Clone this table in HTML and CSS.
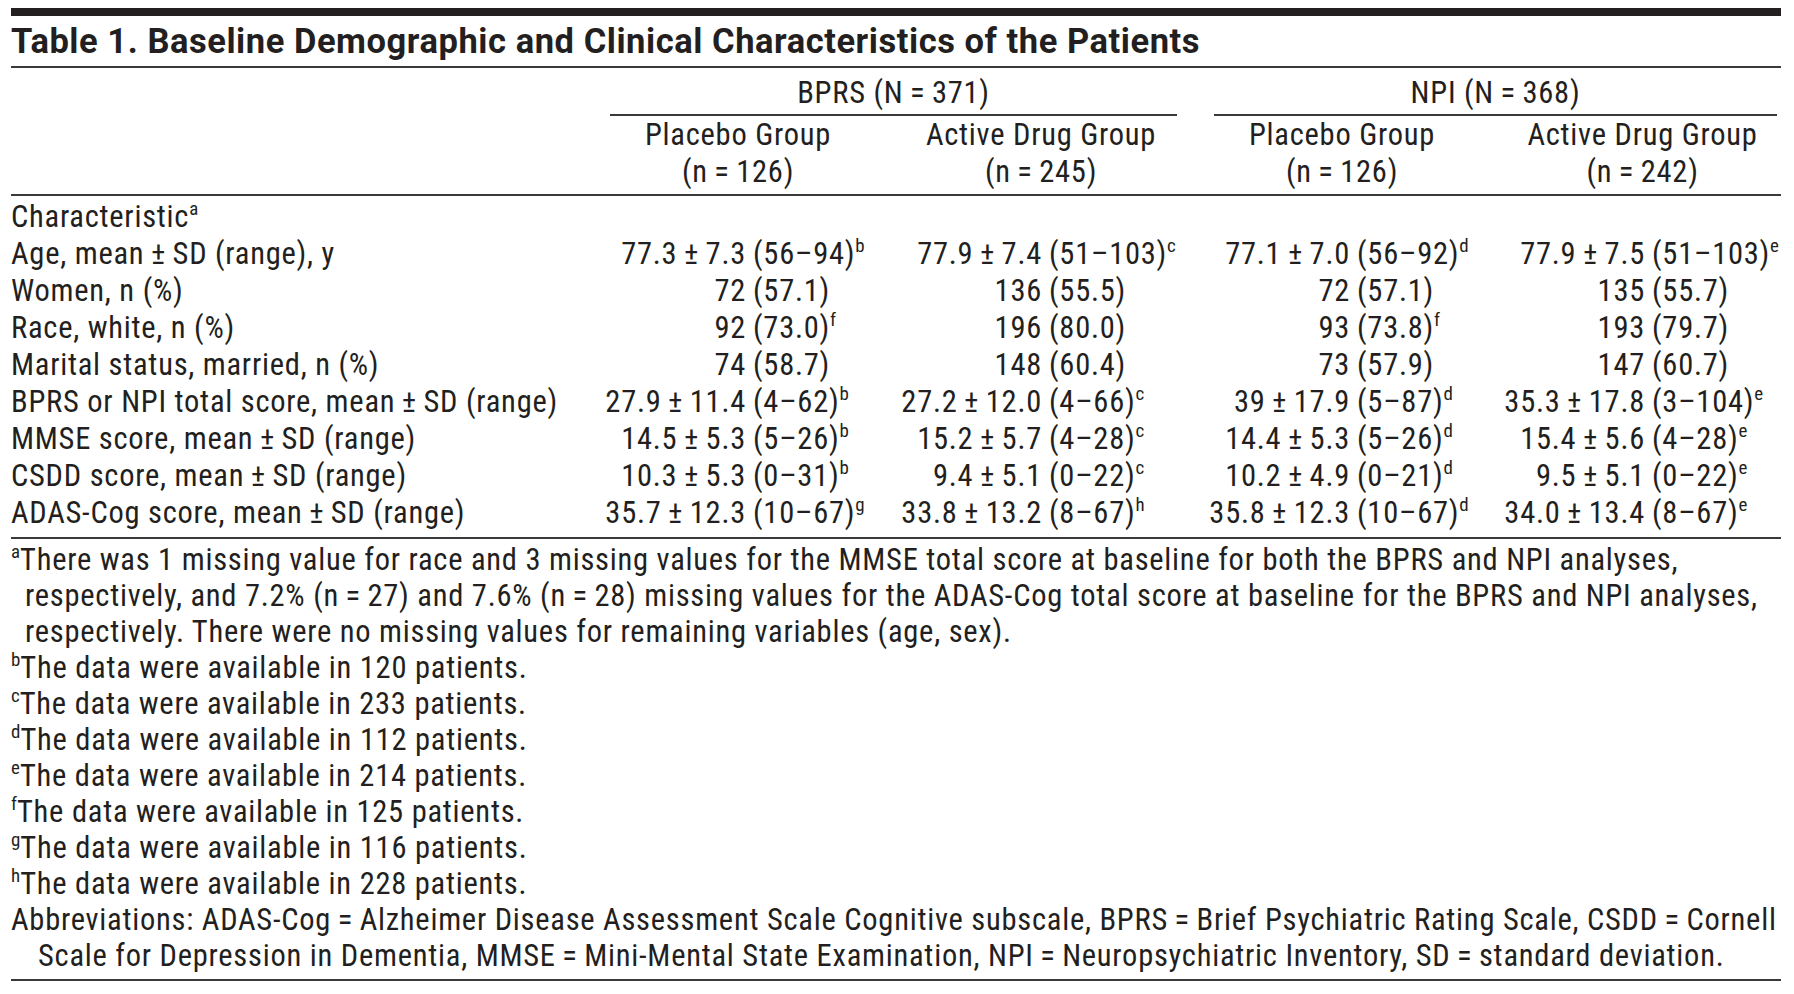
FILE: index.html
```html
<!DOCTYPE html>
<html lang="en">
<head>
<meta charset="utf-8">
<title>Table 1. Baseline Demographic and Clinical Characteristics of the Patients</title>
<link rel="stylesheet" href="styles.css">
</head>
<body>
<div class="page">
  <div class="topbar"></div>
  <h1 class="title">Table 1. Baseline Demographic and Clinical Characteristics of the Patients</h1>

  <div class="thead">
    <div class="span c-bprs">BPRS (N&#8201;=&#8201;371)</div>
    <div class="span c-npi">NPI (N&#8201;=&#8201;368)</div>
    <div class="hd c1">Placebo Group<br>(n&#8201;=&#8201;126)</div>
    <div class="hd c2">Active Drug Group<br>(n&#8201;=&#8201;245)</div>
    <div class="hd c3">Placebo Group<br>(n&#8201;=&#8201;126)</div>
    <div class="hd c4">Active Drug Group<br>(n&#8201;=&#8201;242)</div>
  </div>

  <div class="tbody">
    <div class="lab">Characteristic<sup>a</sup></div>

    <div class="lab">Age, mean&#8201;±&#8201;SD (range), y</div>
    <div class="v p c1"><span class="l">77.3&#8201;±&#8201;7.3</span><span class="r">(56–94)<sup>b</sup></span></div>
    <div class="v a c2"><span class="l">77.9&#8201;±&#8201;7.4</span><span class="r">(51–103)<sup>c</sup></span></div>
    <div class="v p c3"><span class="l">77.1&#8201;±&#8201;7.0</span><span class="r">(56–92)<sup>d</sup></span></div>
    <div class="v a c4"><span class="l">77.9&#8201;±&#8201;7.5</span><span class="r">(51–103)<sup>e</sup></span></div>

    <div class="lab">Women, n (%)</div>
    <div class="v p c1"><span class="l">72</span><span class="r">(57.1)</span></div>
    <div class="v a c2"><span class="l">136</span><span class="r">(55.5)</span></div>
    <div class="v p c3"><span class="l">72</span><span class="r">(57.1)</span></div>
    <div class="v a c4"><span class="l">135</span><span class="r">(55.7)</span></div>

    <div class="lab">Race, white, n (%)</div>
    <div class="v p c1"><span class="l">92</span><span class="r">(73.0)<sup>f</sup></span></div>
    <div class="v a c2"><span class="l">196</span><span class="r">(80.0)</span></div>
    <div class="v p c3"><span class="l">93</span><span class="r">(73.8)<sup>f</sup></span></div>
    <div class="v a c4"><span class="l">193</span><span class="r">(79.7)</span></div>

    <div class="lab">Marital status, married, n (%)</div>
    <div class="v p c1"><span class="l">74</span><span class="r">(58.7)</span></div>
    <div class="v a c2"><span class="l">148</span><span class="r">(60.4)</span></div>
    <div class="v p c3"><span class="l">73</span><span class="r">(57.9)</span></div>
    <div class="v a c4"><span class="l">147</span><span class="r">(60.7)</span></div>

    <div class="lab">BPRS or NPI total score, mean&#8201;±&#8201;SD (range)</div>
    <div class="v p c1"><span class="l">27.9&#8201;±&#8201;11.4</span><span class="r">(4–62)<sup>b</sup></span></div>
    <div class="v a c2"><span class="l">27.2&#8201;±&#8201;12.0</span><span class="r">(4–66)<sup>c</sup></span></div>
    <div class="v p c3"><span class="l">39&#8201;±&#8201;17.9</span><span class="r">(5–87)<sup>d</sup></span></div>
    <div class="v a c4"><span class="l">35.3&#8201;±&#8201;17.8</span><span class="r">(3–104)<sup>e</sup></span></div>

    <div class="lab">MMSE score, mean&#8201;±&#8201;SD (range)</div>
    <div class="v p c1"><span class="l">14.5&#8201;±&#8201;5.3</span><span class="r">(5–26)<sup>b</sup></span></div>
    <div class="v a c2"><span class="l">15.2&#8201;±&#8201;5.7</span><span class="r">(4–28)<sup>c</sup></span></div>
    <div class="v p c3"><span class="l">14.4&#8201;±&#8201;5.3</span><span class="r">(5–26)<sup>d</sup></span></div>
    <div class="v a c4"><span class="l">15.4&#8201;±&#8201;5.6</span><span class="r">(4–28)<sup>e</sup></span></div>

    <div class="lab">CSDD score, mean&#8201;±&#8201;SD (range)</div>
    <div class="v p c1"><span class="l">10.3&#8201;±&#8201;5.3</span><span class="r">(0–31)<sup>b</sup></span></div>
    <div class="v a c2"><span class="l">9.4&#8201;±&#8201;5.1</span><span class="r">(0–22)<sup>c</sup></span></div>
    <div class="v p c3"><span class="l">10.2&#8201;±&#8201;4.9</span><span class="r">(0–21)<sup>d</sup></span></div>
    <div class="v a c4"><span class="l">9.5&#8201;±&#8201;5.1</span><span class="r">(0–22)<sup>e</sup></span></div>

    <div class="lab">ADAS-Cog score, mean&#8201;±&#8201;SD (range)</div>
    <div class="v p c1"><span class="l">35.7&#8201;±&#8201;12.3</span><span class="r">(10–67)<sup>g</sup></span></div>
    <div class="v a c2"><span class="l">33.8&#8201;±&#8201;13.2</span><span class="r">(8–67)<sup>h</sup></span></div>
    <div class="v p c3"><span class="l">35.8&#8201;±&#8201;12.3</span><span class="r">(10–67)<sup>d</sup></span></div>
    <div class="v a c4"><span class="l">34.0&#8201;±&#8201;13.4</span><span class="r">(8–67)<sup>e</sup></span></div>
  </div>

  <div class="notes">
    <p class="fn"><sup>a</sup>There was 1 missing value for race and 3 missing values for the MMSE total score at baseline for both the BPRS and NPI analyses,<br>respectively, and 7.2% (n&#8201;=&#8201;27) and 7.6% (n&#8201;=&#8201;28) missing values for the ADAS-Cog total score at baseline for the BPRS and NPI analyses,<br>respectively. There were no missing values for remaining variables (age, sex).</p>
    <p class="fn"><sup>b</sup>The data were available in 120 patients.</p>
    <p class="fn"><sup>c</sup>The data were available in 233 patients.</p>
    <p class="fn"><sup>d</sup>The data were available in 112 patients.</p>
    <p class="fn"><sup>e</sup>The data were available in 214 patients.</p>
    <p class="fn"><sup>f</sup>The data were available in 125 patients.</p>
    <p class="fn"><sup>g</sup>The data were available in 116 patients.</p>
    <p class="fn"><sup>h</sup>The data were available in 228 patients.</p>
    <p class="fn abbr">Abbreviations: ADAS-Cog&#8201;=&#8201;Alzheimer Disease Assessment Scale Cognitive subscale, BPRS&#8201;=&#8201;Brief Psychiatric Rating Scale, CSDD&#8201;=&#8201;Cornell<br>Scale for Depression in Dementia, MMSE&#8201;=&#8201;Mini-Mental State Examination, NPI&#8201;=&#8201;Neuropsychiatric Inventory, SD&#8201;=&#8201;standard deviation.</p>
  </div>
</div>
</body>
</html>
```
FILE: styles.css
```css
html, body {
  margin: 0;
  background: #ffffff;
}

body {
  color: #231f20;
  font-family: "Roboto", "Liberation Sans", sans-serif;
  font-stretch: 87.5%;
  font-size: 30.5px;
  letter-spacing: 0.75px;
}

.page {
  margin-left: 11px;
  width: 1770px;
  padding-top: 8px;
}

.topbar {
  height: 8px;
  background: #231f20;
}

.title {
  margin: 5px 0 0;
  padding-bottom: 5px;
  font-size: 34.5px;
  font-weight: 700;
  font-stretch: 100%;
  letter-spacing: 0.55px;
  line-height: 40px;
  white-space: nowrap;
  border-bottom: 2px solid #3a3a3a;
}

.thead,
.tbody {
  display: grid;
  grid-template-columns: 587px 280px 23px 280px 21px 280px 22px 277px;
  line-height: 37px;
  white-space: nowrap;
}

.thead {
  padding-top: 6px;
  padding-bottom: 4px;
  border-bottom: 2px solid #3a3a3a;
}

.span {
  grid-row: 1;
  text-align: center;
  margin: 0 4px 0 12px;
  padding-bottom: 3px;
  border-bottom: 2px solid #3a3a3a;
}

.c-bprs { grid-column: 2 / 5; }
.c-npi { grid-column: 6 / 9; }

.hd {
  grid-row: 2;
  text-align: center;
}

.c1 { grid-column: 2; }
.c2 { grid-column: 4; }
.c3 { grid-column: 6; }
.c4 { grid-column: 8; }

.tbody {
  padding-top: 2px;
  padding-bottom: 6px;
  border-bottom: 2px solid #3a3a3a;
}

.lab {
  grid-column: 1;
}

.v {
  display: grid;
}

.v.p { grid-template-columns: 155px auto; }
.v.a { grid-template-columns: 148px auto; }

.v .l {
  text-align: right;
  padding-right: 7px;
}

.v .r {
  text-align: left;
}

sup {
  font-size: 0.62em;
  line-height: 0;
  letter-spacing: 0;
  vertical-align: 0.62em;
}

.notes {
  padding-top: 3px;
  padding-bottom: 5px;
  line-height: 36px;
  border-bottom: 2px solid #3a3a3a;
}

.fn {
  margin: 0;
  padding-left: 14px;
  text-indent: -14px;
  white-space: nowrap;
}

.fn.abbr {
  padding-left: 27px;
  text-indent: -27px;
}
```
